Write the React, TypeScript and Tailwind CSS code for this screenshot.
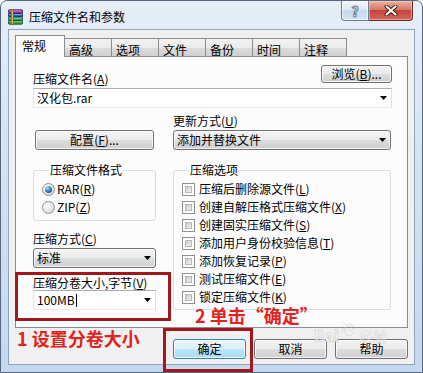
import React from "react";

const FONT = "font-['Noto_Sans_CJK_SC',sans-serif]";

function Btn({
  children,
  className = "",
  def = false,
}: {
  children: React.ReactNode;
  className?: string;
  def?: boolean;
}) {
  return (
    <div
      className={`flex items-center justify-center rounded-[3px] border text-[12px] leading-none text-black ${
        def
          ? "border-[#3c7fb1] bg-[linear-gradient(#eaf6fd,#d9f0fc_50%,#bee6fd_50%,#a7d9f5)] shadow-[inset_0_0_0_1px_rgba(255,255,255,0.8)]"
          : "border-[#707070] bg-[linear-gradient(#f2f2f2,#ebebeb_50%,#dddddd_50%,#cfcfcf)] shadow-[inset_0_0_0_1px_rgba(255,255,255,0.75)]"
      } ${className}`}
    >
      {children}
    </div>
  );
}

function Arrow() {
  return (
    <svg width="7" height="4" viewBox="0 0 7 4" className="shrink-0">
      <path d="M0 0H7L3.5 4Z" fill="#000" />
    </svg>
  );
}

function Combo({
  children,
  list = false,
  className = "",
}: {
  children: React.ReactNode;
  list?: boolean;
  className?: string;
}) {
  return (
    <div
      className={`flex h-[20px] items-center justify-between pl-[3px] pr-[4px] text-[12px] leading-none text-black ${
        list
          ? "rounded-[3px] border border-[#707070] bg-[linear-gradient(#f2f2f2,#ebebeb_50%,#dddddd_50%,#cfcfcf)] shadow-[inset_0_0_0_1px_rgba(255,255,255,0.75)]"
          : "border border-[#abadb3] border-l-[#e2e3ea] border-r-[#dbdfe6] border-b-[#e3e9ef] bg-white"
      } ${className}`}
    >
      <span className="flex items-center">{children}</span>
      <Arrow />
    </div>
  );
}

function U({ c }: { c: string }) {
  return (
    <>
      (<span className="underline underline-offset-[1px]">{c}</span>)
    </>
  );
}

function Radio({ checked, label }: { checked?: boolean; label: React.ReactNode }) {
  return (
    <div className="flex h-[18px] items-center gap-[2px]">
      <span className="flex h-[13px] w-[13px] items-center justify-center rounded-full border border-[#8e8f8f] bg-[radial-gradient(circle_at_35%_35%,#ffffff,#d8d8d8_80%)]">
        {checked && (
          <span className="h-[7px] w-[7px] rounded-full bg-[radial-gradient(circle_at_35%_30%,#a8dcf8,#2a79b4_55%,#0f4a78)]" />
        )}
      </span>
      <span className="text-[12px] leading-none">{label}</span>
    </div>
  );
}

function Check({ label }: { label: React.ReactNode }) {
  return (
    <div className="flex h-[18px] items-center gap-[4px]">
      <span className="flex h-[13px] w-[13px] items-center justify-center border border-[#8e8f8f] bg-white p-[2px]">
        <span className="h-full w-full border border-[#b8b8b8] bg-[linear-gradient(135deg,#c9c9c9,#f3f3f3)]" />
      </span>
      <span className="text-[12px] leading-none whitespace-nowrap">{label}</span>
    </div>
  );
}

function RarIcon() {
  return (
    <svg width="17" height="16" viewBox="0 0 17 16">
      <rect x="1.5" y="0.8" width="14" height="3.6" rx="0.8" fill="#9b3fb0" stroke="#2c1533" strokeWidth="0.8" />
      <rect x="1.5" y="4.4" width="14" height="3.6" rx="0.8" fill="#2f5fc6" stroke="#15213f" strokeWidth="0.8" />
      <rect x="1.5" y="8" width="14" height="3.6" rx="0.8" fill="#2ea087" stroke="#123a2f" strokeWidth="0.8" />
      <rect x="1.5" y="11.6" width="14" height="3.6" rx="0.8" fill="#3f9a2c" stroke="#173a12" strokeWidth="0.8" />
      <rect x="2.2" y="1.4" width="12.6" height="1" fill="#d79ae4" opacity="0.8" />
      <rect x="2.2" y="5" width="12.6" height="1" fill="#8fb0f0" opacity="0.8" />
      <rect x="2.2" y="8.6" width="12.6" height="1" fill="#8fe0c8" opacity="0.8" />
      <rect x="2.2" y="12.2" width="12.6" height="1" fill="#9fe08a" opacity="0.8" />
      <rect x="4.2" y="0.3" width="2.2" height="15.4" fill="#d9b46a" stroke="#6b4a1a" strokeWidth="0.6" />
    </svg>
  );
}

export default function App() {
  const tabs = ["高级", "选项", "文件", "备份", "时间", "注释"];
  return (
    <div className={`relative h-[373px] w-[423px] overflow-hidden bg-white ${FONT} text-black`}>
      <div className="flex h-full flex-col rounded-t-[7px] border border-[#56677f] bg-[linear-gradient(180deg,#e6eef8,#d3e2f3_45%,#c4d8ef)]">
        {/* title bar */}
        <div className="flex h-[28px] shrink-0 items-start">
          <div className="ml-[6px] mt-[8px]">
            <RarIcon />
          </div>
          <div className="ml-[5px] mt-[9px] text-[12px] leading-[14px]">压缩文件名和参数</div>
          <div className="ml-auto mr-[9px] flex h-[20px]">
            <div className="flex w-[28px] items-center justify-center rounded-bl-[4px] border border-t-0 border-[#6d7f98] bg-[linear-gradient(#f3f7fb,#dde7f2_50%,#c9d8ea_50%,#d6e3f1)] shadow-[inset_0_0_0_1px_rgba(255,255,255,0.6)]">
              <span className="text-[14px] font-bold leading-none text-[#f4f6f9] [-webkit-text-stroke:1px_#6a7a8e]">?</span>
            </div>
            <div className="flex w-[44px] items-center justify-center rounded-br-[4px] border border-l-0 border-t-0 border-[#6e2a25] bg-[linear-gradient(#eab3a5,#d77767_45%,#c5443a_50%,#d2685a)] shadow-[inset_0_0_0_1px_rgba(255,210,200,0.5)]">
              <svg width="14" height="11" viewBox="0 0 14 11">
                <path d="M2.5 1.5L11.5 9.5M11.5 1.5L2.5 9.5" stroke="#4a1612" strokeWidth="4" strokeLinecap="round" />
                <path d="M2.5 1.5L11.5 9.5M11.5 1.5L2.5 9.5" stroke="#ffffff" strokeWidth="2.2" strokeLinecap="round" />
              </svg>
            </div>
          </div>
        </div>

        {/* client area */}
        <div className="mx-[7px] flex flex-1 flex-col border border-[#8ea3be] bg-[#f0f0f0] pl-[6px] pr-[6px] pt-[5px]">
          {/* tab strip */}
          <div className="relative z-10 flex h-[21px] items-end">
            <div className="-mb-px h-[22px] w-[50px] border border-b-0 border-[#898c95] bg-[#fcfcfc] pl-[6px] pt-[3px] text-[12px] leading-[14px]">
              常规
            </div>
            {tabs.map((t) => (
              <div
                key={t}
                className="h-[18px] w-[47px] border-r border-t border-[#898c95] bg-[linear-gradient(#f2f2f2,#ebebeb_50%,#dddddd_50%,#cfcfcf)] pl-[4px] pt-[4px] text-[12px] leading-[14px]"
              >
                {t}
              </div>
            ))}
          </div>

          {/* tab panel */}
          <div className="h-[272px] border border-[#898c95] bg-[#fcfcfc] pl-[17px] pr-[15px] pt-[8px]">
            <div className="flex h-[21px] items-end justify-between">
              <div className="text-[12px] leading-[14px]">
                压缩文件名<U c="A" />
              </div>
              <Btn className="h-[18px] w-[71px] self-start">
                浏览<U c="B" />...
              </Btn>
            </div>
            <Combo className="mt-[2px]">汉化包.rar</Combo>

            <div className="mt-[5px] grid grid-cols-[123px_218px] gap-x-[17px]">
              <div className="flex items-end">
                <Btn className="ml-[2px] h-[20px] w-[119px]">
                  配置<U c="F" />...
                </Btn>
              </div>
              <div className="flex flex-col">
                <div className="h-[15px] text-[12px] leading-[15px]">
                  更新方式<U c="U" />
                </div>
                <Combo list className="mt-[2px]">
                  添加并替换文件
                </Combo>
              </div>

              {/* left column */}
              <div className="mt-[13px] flex flex-col">
                <fieldset className="min-w-0 rounded-[3px] border border-[#d5dfe5] pb-[4px] pl-[8px] pt-[3px]">
                  <legend className="ml-[7px] px-[1px] text-[12px] leading-[14px]">压缩文件格式</legend>
                  <Radio checked label={<>RAR<U c="R" /></>} />
                  <Radio label={<>ZIP<U c="Z" /></>} />
                </fieldset>
                <div className="mt-[11px] text-[12px] leading-[14px]">
                  压缩方式<U c="C" />
                </div>
                <Combo list className="mt-[2px]">
                  标准
                </Combo>
                <div className="mt-[8px] text-[12px] leading-[14px]">
                  压缩分卷大小,字节<U c="V" />
                </div>
                <Combo>
                  100MB<span className="ml-[1px] inline-block h-[13px] w-px bg-black" />
                </Combo>
              </div>

              {/* right column */}
              <div className="mt-[13px]">
                <fieldset className="min-w-0 rounded-[3px] border border-[#d5dfe5] pb-[3px] pl-[8px] pt-[3px]">
                  <legend className="ml-[7px] px-[1px] text-[12px] leading-[14px]">压缩选项</legend>
                  <Check label={<>压缩后删除源文件<U c="L" /></>} />
                  <Check label={<>创建自解压格式压缩文件<U c="X" /></>} />
                  <Check label={<>创建固实压缩文件<U c="S" /></>} />
                  <Check label={<>添加用户身份校验信息<U c="T" /></>} />
                  <Check label={<>添加恢复记录<U c="P" /></>} />
                  <Check label={<>测试压缩文件<U c="E" /></>} />
                  <Check label={<>锁定压缩文件<U c="K" /></>} />
                </fieldset>
              </div>
            </div>
          </div>

          {/* bottom buttons */}
          <div className="mt-[11px] flex justify-end gap-[8px]">
            <Btn def className="h-[20px] w-[73px]">确定</Btn>
            <Btn className="h-[20px] w-[73px]">取消</Btn>
            <Btn className="h-[20px] w-[73px]">帮助</Btn>
          </div>
        </div>
        <div className="h-[7px] shrink-0" />
      </div>

      {/* watermark */}
      <div className="pointer-events-none absolute left-[314px] top-[322px] flex items-end gap-[2px] opacity-60">
        <span className="text-[16px] font-bold leading-none text-white [-webkit-text-stroke:1px_#d0d0d0]">Bai</span>
        <svg width="16" height="16" viewBox="0 0 18 18" className="mb-[5px]">
          <g fill="none" stroke="#cfcfcf" strokeWidth="1">
            <circle cx="5" cy="4" r="2" />
            <circle cx="10" cy="3" r="2" />
            <circle cx="14" cy="6" r="2" />
            <circle cx="3" cy="9" r="2" />
            <ellipse cx="9" cy="12" rx="4" ry="3.5" />
          </g>
        </svg>
        <span className="text-[14px] leading-none text-white [-webkit-text-stroke:0.6px_#d4d4d4]">经验</span>
      </div>

      {/* annotations */}
      <div className="pointer-events-none absolute left-[15px] top-[272px] h-[49px] w-[156px] border-[3px] border-[#a3171c]" />
      <div className="pointer-events-none absolute left-[163px] top-[328px] h-[44px] w-[90px] border-[3px] border-[#a3171c]" />
      <div className="pointer-events-none absolute left-[17px] top-[329px] whitespace-nowrap text-[18px] font-bold leading-[18px] text-[#e2231c]">
        1 设置分卷大小
      </div>
      <div className="pointer-events-none absolute left-[195px] top-[306px] whitespace-nowrap text-[18px] font-bold leading-[18px] text-[#e2231c]">
        2 单击“确定”
      </div>
    </div>
  );
}
